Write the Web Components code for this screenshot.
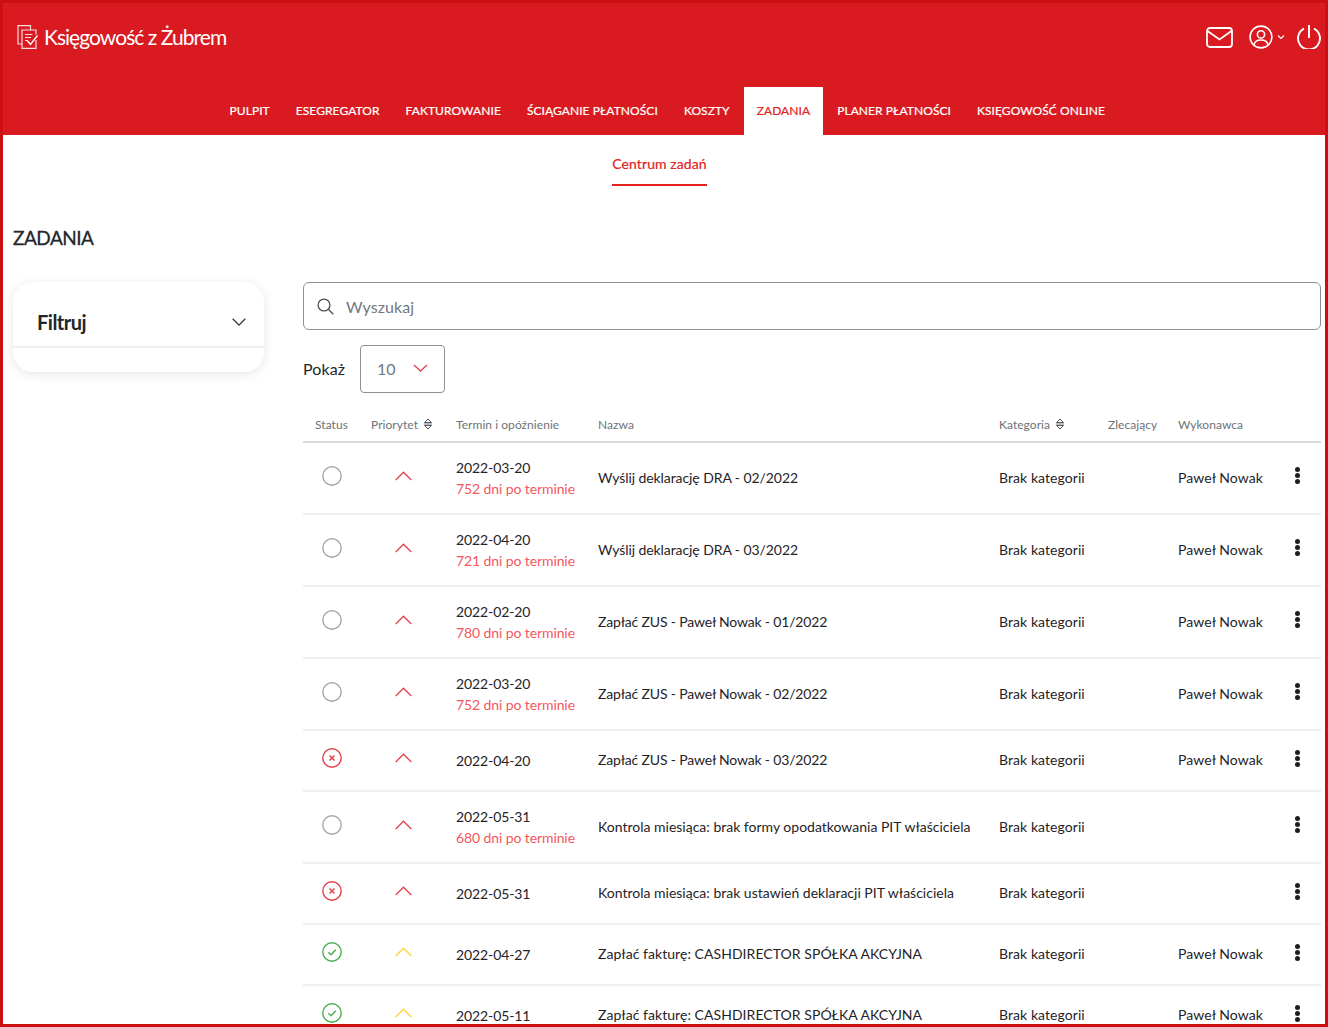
<!DOCTYPE html>
<html lang="pl">
<head>
<meta charset="utf-8">
<title>Zadania</title>
<style>
html, body { margin: 0; height: 1027px; overflow: hidden; background: #fff; }
body { font-family: Lato, "Noto Sans", sans-serif; color: #1b1f23; position: relative; }
task-row.zus { letter-spacing: -.17px; }
task-row.dra { letter-spacing: -.08px; }
task-row.faktura { letter-spacing: .05px; }
</style>
</head>
<body>
<app-header></app-header>
<sub-tabs></sub-tabs>
<page-body>
    <filter-card slot="side"></filter-card>
    <search-box></search-box>
    <page-size></page-size>
    <task-table>
        <task-row class="dra" status="open" priority="high" date="2022-03-20" late="752 dni po terminie" assignee="Paweł Nowak">Wyślij deklarację DRA - 02/2022</task-row>
        <task-row class="dra" status="open" priority="high" date="2022-04-20" late="721 dni po terminie" assignee="Paweł Nowak">Wyślij deklarację DRA - 03/2022</task-row>
        <task-row class="zus" status="open" priority="high" date="2022-02-20" late="780 dni po terminie" assignee="Paweł Nowak">Zapłać ZUS - Paweł Nowak - 01/2022</task-row>
        <task-row class="zus" status="open" priority="high" date="2022-03-20" late="752 dni po terminie" assignee="Paweł Nowak">Zapłać ZUS - Paweł Nowak - 02/2022</task-row>
        <task-row class="zus" status="rejected" priority="high" date="2022-04-20" assignee="Paweł Nowak">Zapłać ZUS - Paweł Nowak - 03/2022</task-row>
        <task-row status="open" priority="high" date="2022-05-31" late="680 dni po terminie">Kontrola miesiąca: brak formy opodatkowania PIT właściciela</task-row>
        <task-row status="rejected" priority="high" date="2022-05-31">Kontrola miesiąca: brak ustawień deklaracji PIT właściciela</task-row>
        <task-row class="faktura" status="done" priority="medium" date="2022-04-27" assignee="Paweł Nowak">Zapłać fakturę: CASHDIRECTOR SPÓŁKA AKCYJNA</task-row>
        <task-row class="faktura" status="done" priority="medium" date="2022-05-11" assignee="Paweł Nowak">Zapłać fakturę: CASHDIRECTOR SPÓŁKA AKCYJNA</task-row>
    </task-table>
</page-body>
<window-frame></window-frame>

<script>
const SORT_ICON = `<svg width="10" height="12" viewBox="0 0 10 12" fill="none" stroke="#55595e" stroke-width="1"><path d="M1.500 4.500 5 1l3.500 3.500zM1.500 7.500 5 11l3.500-3.500z"/><path d="M.8 6h8.400" stroke-width=".8"/></svg>`;

class AppHeader extends HTMLElement {
    constructor() {
        super();
        this.attachShadow({ mode: 'open' });
        const items = ['PULPIT', 'ESEGREGATOR', 'FAKTUROWANIE', 'ŚCIĄGANIE PŁATNOŚCI', 'KOSZTY', 'ZADANIA', 'PLANER PŁATNOŚCI', 'KSIĘGOWOŚĆ ONLINE'];
        this.shadowRoot.innerHTML = `
            <style>
                :host {
                    display: flex;
                    flex-direction: column;
                    height: 135px;
                    background: #d91b21;
                    color: #fff;
                }
                .top {
                    display: flex;
                    align-items: center;
                    height: 87px;
                    padding: 0 7px 14px 17px;
                    box-sizing: border-box;
                }
                .logo {
                    display: flex;
                    align-items: center;
                    gap: 5px;
                    font-size: 21px;
                    letter-spacing: -0.95px;
                    flex: 1;
                }
                .actions { display: flex; align-items: center; }
                svg { display: block; }
                nav {
                    display: flex;
                    height: 48px;
                    padding-left: 216.5px;
                    font-size: 12px;
                    letter-spacing: 0.07px;
                    -webkit-text-stroke: .2px currentColor;
                }
                nav a {
                    display: flex;
                    align-items: center;
                    padding: 0 13px 2px;
                    white-space: nowrap;
                }
                nav a.active {
                    background: #fff;
                    color: #e3211d;
                    margin: 0 1px;
                }
            </style>
            <div class="top">
                <div class="logo">
                    <svg width="22" height="24" viewBox="0 0 22 24" fill="none" stroke="#f8dcdd" stroke-width="1.200">
                        <path d="M5 19H1V.6h12.500V5"/>
                        <path d="M19 9.500V5H5v18.400h14V15"/>
                        <path d="M8 9.500h7.500M8 12.500h6M8 15.500h3"/>
                        <path d="m10.500 16 3 3.500 7-9" stroke="#fff" stroke-width="1.400"/>
                    </svg>
                    <span>Księgowość z Żubrem</span>
                </div>
                <div class="actions">
                    <svg width="27" height="21" viewBox="0 0 27 21" fill="none" stroke="#fff" stroke-width="1.800" style="margin:2px 16px 0 0">
                        <rect x="1" y="1" width="25" height="19" rx="3"/>
                        <path d="m1.500 4 12 8.500L25.500 4"/>
                    </svg>
                    <svg width="24" height="24" viewBox="0 0 24 24" fill="none" stroke="#fff" stroke-width="1.600">
                        <circle cx="12" cy="12" r="10.900"/>
                        <circle cx="12" cy="9.400" r="3.600"/>
                        <path d="M5 20c.5-3.400 3-5 7-5s6.500 1.600 7 5"/>
                    </svg>
                    <svg width="8" height="6" viewBox="0 0 8 6" fill="none" stroke="#fff" stroke-width="1.100" style="margin:0 12px 0 4px">
                        <path d="m1 1.500 3 3 3-3"/>
                    </svg>
                    <svg width="24" height="24" viewBox="0 0 24 24" fill="none" stroke="#fff" stroke-width="1.900">
                        <path d="M7 3.600a11 11 0 1 0 10 0"/>
                        <path d="M12 0v13"/>
                    </svg>
                </div>
            </div>
            <nav>${items.map(i => `<a class="${i === 'ZADANIA' ? 'active' : ''}">${i}</a>`).join('')}</nav>
        `;
    }
}

class SubTabs extends HTMLElement {
    constructor() {
        super();
        this.attachShadow({ mode: 'open' });
        this.shadowRoot.innerHTML = `
            <style>
                :host {
                    display: flex;
                    justify-content: center;
                    height: 51px;
                    padding-right: 9px;
                }
                span {
                    box-sizing: border-box;
                    height: 51px;
                    padding-top: 19px;
                    font-size: 14px;
                    line-height: 20px;
                    letter-spacing: .1px;
                    -webkit-text-stroke: .2px currentColor;
                    color: #e3211d;
                    border-bottom: 2px solid #e3211d;
                }
            </style>
            <span>Centrum zadań</span>
        `;
    }
}

class PageBody extends HTMLElement {
    constructor() {
        super();
        this.attachShadow({ mode: 'open' });
        this.shadowRoot.innerHTML = `
            <style>
                :host { display: block; padding: 0 7px 0 13px; }
                h1 {
                    margin: 0;
                    padding-top: 40px;
                    height: 56px;
                    font-size: 19px;
                    line-height: 24px;
                    font-weight: 400;
                    letter-spacing: -0.5px;
                    -webkit-text-stroke: .3px currentColor;
                    color: #24272b;
                }
                .cols { display: flex; gap: 39px; }
                .side { width: 251px; flex: none; }
                .main { flex: 1; min-width: 0; }
            </style>
            <h1>ZADANIA</h1>
            <div class="cols">
                <div class="side"><slot name="side"></slot></div>
                <div class="main"><slot></slot></div>
            </div>
        `;
    }
}

class FilterCard extends HTMLElement {
    constructor() {
        super();
        this.attachShadow({ mode: 'open' });
        this.shadowRoot.innerHTML = `
            <style>
                :host {
                    display: block;
                    height: 90px;
                    border-radius: 20px;
                    background: #fff;
                    box-shadow: 0 2px 12px rgba(0, 0, 0, .1);
                }
                .head {
                    display: flex;
                    align-items: center;
                    justify-content: space-between;
                    box-sizing: border-box;
                    height: 66px;
                    padding: 16px 18px 0 24px;
                    border-bottom: 2px solid #efefef;
                    font-size: 20px;
                    font-weight: 700;
                    letter-spacing: -0.5px;
                    color: #22262a;
                }
            </style>
            <div class="head">
                <span>Filtruj</span>
                <svg width="14" height="8" viewBox="0 0 14 8" fill="none" stroke="#33373b" stroke-width="1.300"><path d="m.7.800 6.300 6.300L13.300.8"/></svg>
            </div>
        `;
    }
}

class SearchBox extends HTMLElement {
    constructor() {
        super();
        this.attachShadow({ mode: 'open' });
        this.shadowRoot.innerHTML = `
            <style>
                :host {
                    display: flex;
                    align-items: center;
                    gap: 12px;
                    box-sizing: border-box;
                    height: 48px;
                    padding: 0 13px;
                    border: 1px solid #8f8f8f;
                    border-radius: 6px;
                    font-size: 16px;
                    letter-spacing: .1px;
                    color: #73787e;
                }
            </style>
            <svg width="17" height="17" viewBox="0 0 17 17" fill="none" stroke="#4d5156" stroke-width="1.300">
                <circle cx="7" cy="7" r="5.900"/><path d="m11.300 11.300 5 5"/>
            </svg>
            <span>Wyszukaj</span>
        `;
    }
}

class PageSize extends HTMLElement {
    constructor() {
        super();
        this.attachShadow({ mode: 'open' });
        this.shadowRoot.innerHTML = `
            <style>
                :host {
                    display: flex;
                    align-items: center;
                    gap: 15px;
                    margin-top: 15px;
                    font-size: 16px;
                    letter-spacing: .1px;
                    color: #24272b;
                }
                .label { padding-bottom: 2px; }
                .select {
                    display: flex;
                    align-items: center;
                    gap: 17px;
                    box-sizing: border-box;
                    width: 85px;
                    height: 48px;
                    padding: 0 0 2px 16px;
                    border: 1px solid #8f8f8f;
                    border-radius: 4px;
                    letter-spacing: 0;
                    color: #73787e;
                }
            </style>
            <span class="label">Pokaż</span>
            <div class="select">
                <span>10</span>
                <svg width="15" height="8" viewBox="0 0 15 8" fill="none" stroke="#e8424a" stroke-width="1.300"><path d="m1 1 6.500 6L14 1"/></svg>
            </div>
        `;
    }
}

class TaskTable extends HTMLElement {
    constructor() {
        super();
        this.attachShadow({ mode: 'open' });
        this.shadowRoot.innerHTML = `
            <style>
                :host { display: block; margin-top: 15px; }
                .head {
                    display: grid;
                    grid-template-columns: 56px 85px 142px 401px 109px 70px 1fr;
                    align-items: center;
                    box-sizing: border-box;
                    height: 35px;
                    padding-bottom: 1px;
                    border-bottom: 2px solid #d9d9d9;
                    font-size: 12px;
                    letter-spacing: .05px;
                    color: #6d7278;
                }
                .head span {
                    display: flex;
                    align-items: center;
                    gap: 5px;
                    padding-left: 12px;
                    white-space: nowrap;
                }
            </style>
            <div class="head">
                <span>Status</span>
                <span>Priorytet ${SORT_ICON}</span>
                <span>Termin i opóźnienie</span>
                <span>Nazwa</span>
                <span>Kategoria ${SORT_ICON}</span>
                <span>Zlecający</span>
                <span>Wykonawca</span>
            </div>
            <slot></slot>
        `;
    }
}

const STATUS_ICONS = {
    open: `<circle cx="10" cy="10" r="9.200" stroke="#a8a8a8" stroke-width="1.400"/>`,
    rejected: `<circle cx="10" cy="10" r="9.200" stroke="#e5434b" stroke-width="1.400"/><path d="m7.500 7.500 5 5m0-5-5 5" stroke="#e5434b" stroke-width="1.500"/>`,
    done: `<circle cx="10" cy="10" r="9.200" stroke="#4cb050" stroke-width="1.400"/><path d="m6.300 10.300 2.700 2.400 4.800-4.900" stroke="#4cb050" stroke-width="1.500"/>`
};
const PRIORITY_COLORS = { high: '#e5434b', medium: '#fdd23e' };

class TaskRow extends HTMLElement {
    constructor() {
        super();
        this.attachShadow({ mode: 'open' });
    }

    connectedCallback() {
        const status = this.getAttribute('status');
        const late = this.getAttribute('late');
        const priority = PRIORITY_COLORS[this.getAttribute('priority')];
        this.shadowRoot.innerHTML = `
            <style>
                :host {
                    display: grid;
                    grid-template-columns: 56px 85px 142px 401px 179px 1fr 43px;
                    align-items: center;
                    box-sizing: border-box;
                    height: ${late ? 72 : 61}px;
                    padding-bottom: 2px;
                    border-bottom: 2px solid #efefef;
                    font-size: 14px;
                    color: #1f2327;
                }
                .cell { padding-left: 12px; white-space: nowrap; }
                .icon { display: flex; padding: 0 0 3px 19px; }
                .prio { display: flex; padding: 0 0 3px 36px; }
                .date { line-height: 21px; padding-top: 2px; letter-spacing: -.1px; }
                .late { color: #f5565e; }
                .plain { letter-spacing: .07px; }
                .dots {
                    display: flex;
                    flex-direction: column;
                    gap: 1px;
                    padding: 0 0 3px 17px;
                }
                .dots i { width: 5px; height: 5px; border-radius: 50%; background: #1b1f23; }
                svg { display: block; }
            </style>
            <div class="icon"><svg width="20" height="20" viewBox="0 0 20 20" fill="none">${STATUS_ICONS[status]}</svg></div>
            <div class="prio"><svg width="17" height="10" viewBox="0 0 17 10" fill="none" stroke="${priority}" stroke-width="1.300"><path d="m.7 9 7.800-7.800L16.300 9"/></svg></div>
            <div class="cell date">${this.getAttribute('date')}${late ? `<div class="late">${late}</div>` : ''}</div>
            <div class="cell"><slot></slot></div>
            <div class="cell plain">Brak kategorii</div>
            <div class="cell plain">${this.getAttribute('assignee') || ''}</div>
            <div class="dots"><i></i><i></i><i></i></div>
        `;
    }
}

class WindowFrame extends HTMLElement {
    constructor() {
        super();
        this.attachShadow({ mode: 'open' });
        // the frame sits over the whole page, it does not take part in the flow
        this.shadowRoot.innerHTML = `
            <style>
                :host {
                    position: absolute;
                    inset: 0;
                    box-sizing: border-box;
                    border: 3px solid #cb0f13;
                    pointer-events: none;
                }
            </style>
        `;
    }
}

customElements.define('app-header', AppHeader);
customElements.define('sub-tabs', SubTabs);
customElements.define('page-body', PageBody);
customElements.define('filter-card', FilterCard);
customElements.define('search-box', SearchBox);
customElements.define('page-size', PageSize);
customElements.define('task-table', TaskTable);
customElements.define('task-row', TaskRow);
customElements.define('window-frame', WindowFrame);
</script>
</body>
</html>
